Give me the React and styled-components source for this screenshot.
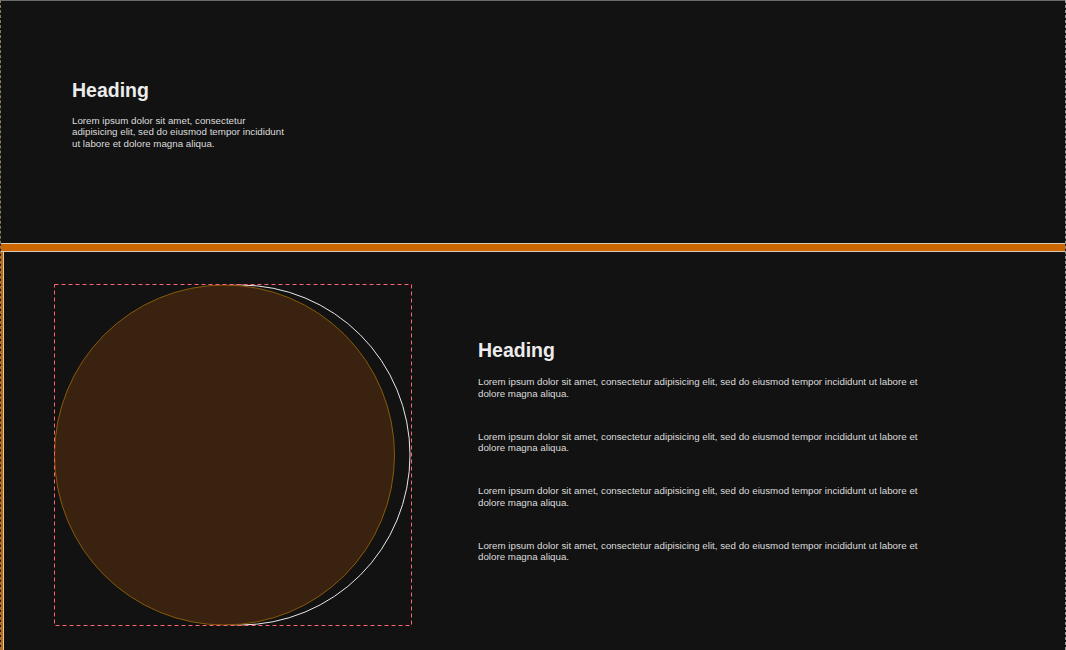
import styled, { createGlobalStyle } from "styled-components";

const GlobalStyle = createGlobalStyle`
    html, body {
        margin: 0;
        padding: 0;
        background: #121212;
    }
    body {
        font-family: "Liberation Sans", Arial, sans-serif;
        color: #e6e6e6;
        overflow: hidden;
    }
`

const Page = styled.div`
    width: 1066px;
    height: 650px;
    box-sizing: border-box;
    border-left: 1px dashed #8c7c58;
    border-right: 1px dashed #9a9a9a;
    display: flex;
    flex-direction: column;
    background: #121212;
`

const TopSection = styled.section`
    height: 243px;
    box-sizing: border-box;
    border-top: 1px solid #6a6a6a;
    padding: 0 0 0 71px;
    display: flex;
    align-items: center;
`

const Divider = styled.div`
    height: 7px;
    background: #cc6600;
    border-top: 1px solid #d9cbb3;
    border-bottom: 1px solid #d9cbb3;
`

const FeatureSection = styled.section`
    flex: 1;
    display: flex;
    align-items: flex-start;
    gap: 66px;
    padding: 32px 0 0 51px;
    border-left: 2px solid #cc6600;
    box-shadow: inset 1px 0 0 #d9cbb3;
`

const TextBlock = styled.div`
    width: ${(props) => props.width}px;
    margin-top: ${(props) => props.top || 0}px;
`

const Heading = styled.h2`
    margin: 0 0 ${(props) => props.gap || 13}px;
    font-size: 19.5px;
    font-weight: bold;
    line-height: 23px;
    color: #ececec;
`

const Text = styled.p`
    margin: 0 0 ${(props) => props.gap || 0}px;
    font-size: 9.75px;
    line-height: 11.5px;
    color: #dcdcdc;
`

const Frame = styled.div`
    width: 358px;
    height: 342px;
    flex-shrink: 0;
`

const Art = styled.svg`
    display: block;
    width: 358px;
    height: 342px;
`

const lorem = "Lorem ipsum dolor sit amet, consectetur adipisicing elit, sed do eiusmod tempor incididunt ut labore et dolore magna aliqua."

function App() {
    return (
        <Page>
            <GlobalStyle />
            <TopSection>
                <TextBlock width={216} top={-16}>
                    <Heading gap={13}>Heading</Heading>
                    <Text>{lorem}</Text>
                </TextBlock>
            </TopSection>
            <Divider />
            <FeatureSection>
                <Frame>
                    <Art viewBox="0 0 358 342">
                        <circle cx="186" cy="171" r="170" fill="none" stroke="#e8e8e8" strokeWidth="1" />
                        <circle cx="170.5" cy="171" r="170" fill="#3a2210" stroke="#8a5a08" strokeWidth="1" />
                        <rect x="0.5" y="0.5" width="357" height="341" fill="none" stroke="#ff6470" strokeWidth="1" strokeDasharray="4 3" />
                    </Art>
                </Frame>
                <TextBlock width={445} top={55}>
                    <Heading gap={14}>Heading</Heading>
                    {[0, 1, 2, 3].map((i) => (
                        <Text key={i} gap={31.5}>{lorem}</Text>
                    ))}
                </TextBlock>
            </FeatureSection>
        </Page>
    )
}

export default App;
